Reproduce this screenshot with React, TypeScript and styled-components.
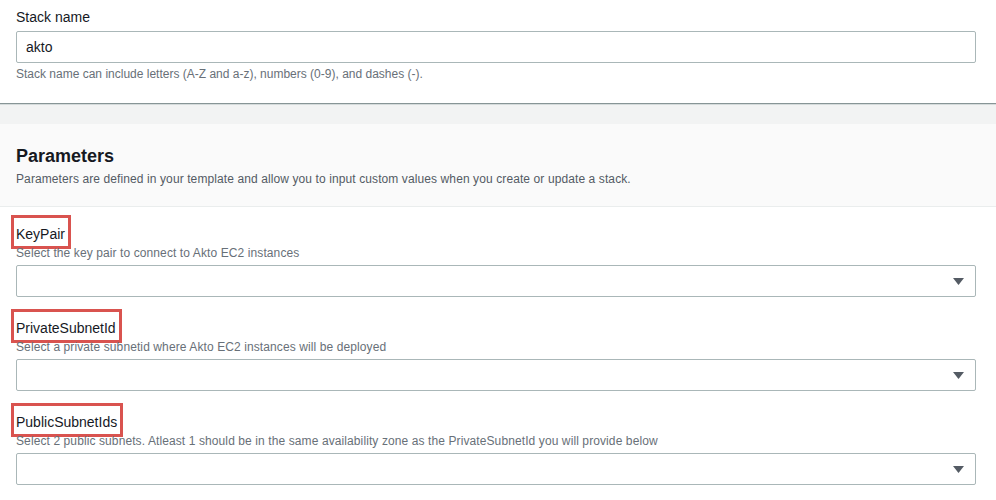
import React from 'react';

import styled, {createGlobalStyle} from 'styled-components';

const GlobalStyle = createGlobalStyle`
    html, body {
        margin:0;
        padding:0;
        background:#fff;
    }
    body {
        font-family:"Liberation Sans", Arial, sans-serif;
        color:#16191f;
        -webkit-font-smoothing:antialiased;
    }
`;

const Page = styled.div`
    width:996px;
    height:500px;
    overflow:hidden;
    background:#fff;
`;

const StackSection = styled.section`
    padding:7px 20px 21px 16px;
    border-bottom:1px solid #879596;
    box-shadow:0 1px 0 #d5dbdb;
`;

const Band = styled.div`
    height:19px;
    margin-top:1px;
    background:#f2f3f3;
`;

const Header = styled.div`
    background:#fafafa;
    border-bottom:1px solid #eaeded;
    padding:20px 20px 19px 16px;
`;

const Heading = styled.h2`
    margin:0;
    font-size:18px;
    line-height:24px;
    font-weight:700;
    color:#16191f;
`;

const Description = styled.p`
    margin:3px 0 0;
    font-size:12px;
    line-height:16px;
    color:#545b64;
    letter-spacing:0.1px;
`;

const Fields = styled.div`
    padding:17px 20px 0 16px;
    display:flex;
    flex-direction:column;
    gap:21px;
`;

const Field = styled.div`
    display:flex;
    flex-direction:column;
`;

const Label = styled.label<{marked?:boolean}>`
    display:block;
    width:fit-content;
    font-size:14px;
    line-height:20px;
    color:#16191f;
    ${({marked})=>marked && `
        border:3px solid #d9534f;
        padding:6px 3px 2px 2px;
        margin:-9px 0 -5px -5px;
    `}
`;

const Help = styled.div<{under?:boolean}>`
    font-size:12px;
    line-height:16px;
    color:#687078;
    margin-top:${({under})=>under ? '3px' : '1px'};
    letter-spacing:${({under})=>under ? '0' : '0.1px'};
`;

const TextInput = styled.input`
    box-sizing:border-box;
    margin-top:4px;
    width:100%;
    height:32px;
    border:1px solid #aab7b8;
    border-radius:2px;
    padding:0 9px;
    font-family:inherit;
    font-size:14px;
    color:#16191f;
    background:#fff;
    outline:none;
`;

const Select = styled.div`
    box-sizing:border-box;
    margin-top:4px;
    height:32px;
    border:1px solid #aab7b8;
    border-radius:2px;
    background:#fff;
    display:flex;
    align-items:center;
    justify-content:flex-end;
    padding-right:11px;
`;

const Caret = () =>
    <svg width="11" height="7" viewBox="0 0 11 7">
        <path d="M0 0 H11 L5.5 7 Z" fill="#545b64" />
    </svg>;

const params = [
    {name:'KeyPair', help:'Select the key pair to connect to Akto EC2 instances'},
    {name:'PrivateSubnetId', help:'Select a private subnetid where Akto EC2 instances will be deployed'},
    {name:'PublicSubnetIds', help:'Select 2 public subnets. Atleast 1 should be in the same availability zone as the PrivateSubnetId you will provide below'},
];

const App:React.FC = () => {
    return <Page>
            <GlobalStyle />
            <StackSection>
                <Label>Stack name</Label>
                <TextInput defaultValue="akto" />
                <Help under>Stack name can include letters (A-Z and a-z), numbers (0-9), and dashes (-).</Help>
            </StackSection>
            <Band />
            <Header>
                <Heading>Parameters</Heading>
                <Description>Parameters are defined in your template and allow you to input custom values when you create or update a stack.</Description>
            </Header>
            <Fields>
                {params.map(p =>
                    <Field key={p.name}>
                        <Label marked>{p.name}</Label>
                        <Help>{p.help}</Help>
                        <Select><Caret /></Select>
                    </Field>
                )}
            </Fields>
        </Page>;
}

export default App;
